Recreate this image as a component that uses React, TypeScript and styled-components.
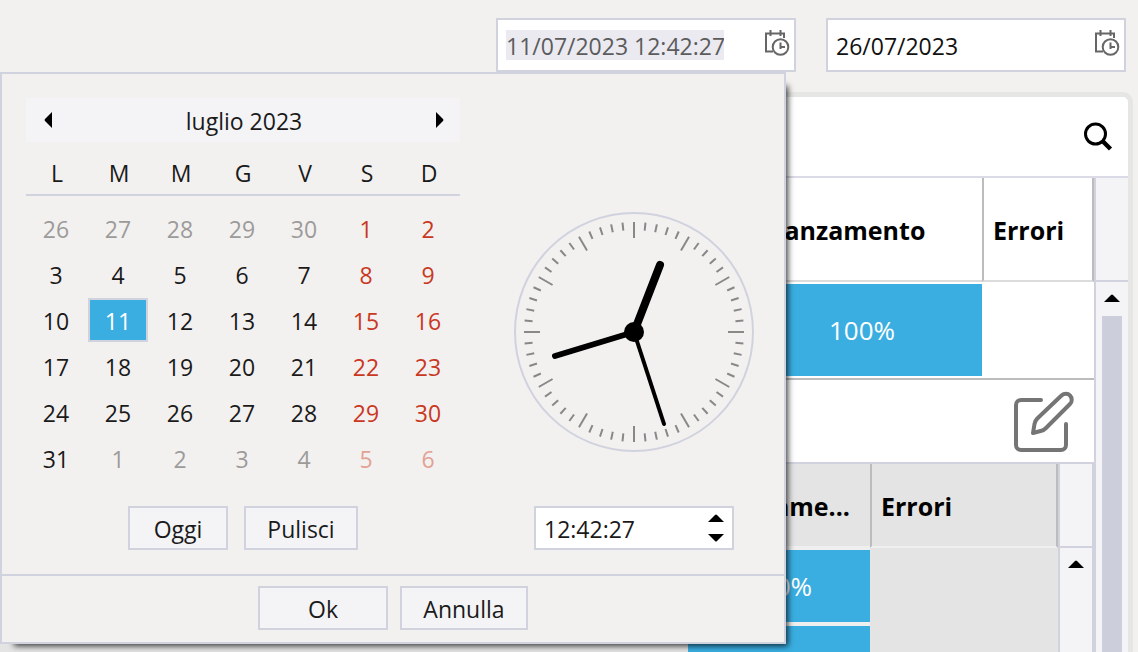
import React from "react";
import styled, { createGlobalStyle } from "styled-components";

const colors = {
  page: "#f3f1f0",
  line: "#d0d2de",
  control: "#f4f4f7",
  accent: "#3aaee1",
  thumb: "#cccedb",
  grid: "#bcbcbc",
  nested: "#e4e4e4",
  weekend: "#c9381f",
};

const GlobalStyle = createGlobalStyle`
  * { box-sizing: border-box; }
  body {
    margin: 0;
    background: ${colors.page};
    color: #1a1a1a;
    font-family: "Open Sans", "Noto Sans", sans-serif;
    font-size: 23px;
    line-height: 30px;
  }
  button, input { font: inherit; color: inherit; }
  button { padding: 0; border: 0; background: none; }
  svg { display: block; }
`;

const Page = styled.div`
  display: flex;
  flex-direction: column;
  height: 100vh;
  overflow: hidden;
`;

const FilterBar = styled.header`
  display: flex;
  justify-content: flex-end;
  gap: 30px;
  padding: 18px 12px 20px;
`;

const DateField = styled.div`
  position: relative;
  display: flex;
  align-items: flex-start;
  justify-content: space-between;
  width: 300px;
  height: 54px;
  padding: 10px 4px 0 8px;
  border: 2px solid ${colors.line};
  background: #fff;
`;

const DateInput = styled.input<{ $selected?: boolean }>`
  width: 218px;
  height: 30px;
  padding: 2px 0 0;
  border: 0;
  outline: 0;
  background: ${(p) => (p.$selected ? "#ebeaf1" : "transparent")};
  color: ${(p) => (p.$selected ? "#5c5c5c" : "#111")};
`;

const Popup = styled.div`
  position: absolute;
  z-index: 2;
  top: 52px;
  right: 8px;
  width: 786px;
  border: 2px solid ${colors.line};
  background: ${colors.page};
  box-shadow: 8px 8px 6px -6px rgba(0, 0, 0, 0.75);
`;

const PopupBody = styled.div`
  display: flex;
  padding: 24px 0;
  border-bottom: 2px solid ${colors.line};
`;

const CalendarColumn = styled.section`
  padding: 0 24px;
`;

const ClockColumn = styled.section`
  display: flex;
  flex: 1;
  flex-direction: column;
  align-items: center;
  justify-content: flex-end;
  gap: 54px;
`;

const MonthBar = styled.div`
  display: flex;
  align-items: center;
  justify-content: space-between;
  height: 44px;
  padding: 2px 12px 0 14px;
  background: ${colors.control};
`;

const ArrowButton = styled.button`
  display: flex;
  align-items: center;
  justify-content: center;
  width: 16px;
  height: 24px;
  padding-bottom: 2px;
`;

const MonthTable = styled.table`
  width: 434px;
  margin-top: 10px;
  border-spacing: 0;
  table-layout: fixed;

  tbody::before {
    content: "";
    display: block;
    height: 10px;
  }
`;

const Weekday = styled.th`
  height: 44px;
  padding: 0;
  border-bottom: 2px solid ${colors.line};
  font-weight: 400;
`;

const DayCell = styled.td`
  height: 46px;
  padding: 0 2px 2px 0;
`;

const Day = styled.button<{ $weekend: boolean; $outside: boolean; $selected: boolean }>`
  display: block;
  width: 100%;
  height: 44px;
  padding-top: 2px;
  border: 2px solid ${(p) => (p.$selected ? colors.line : "transparent")};
  background: ${(p) => (p.$selected ? colors.accent : "transparent")};
  color: ${(p) =>
    p.$selected
      ? "#fff"
      : p.$weekend
        ? p.$outside
          ? "#e2a195"
          : colors.weekend
        : p.$outside
          ? "#9c9b9a"
          : "#1a1a1a"};
`;

const ButtonRow = styled.div<{ $gap: number }>`
  display: flex;
  justify-content: center;
  gap: ${(p) => p.$gap}px;
`;

const QuickActions = styled(ButtonRow)`
  margin-top: 24px;
`;

const PopupFooter = styled(ButtonRow)`
  padding: 10px 0 12px;
`;

const PushButton = styled.button<{ $width: number }>`
  width: ${(p) => p.$width}px;
  height: 44px;
  padding-top: 2px;
  border: 2px solid ${colors.line};
  background: ${colors.control};
`;

const TimeField = styled.div`
  display: flex;
  align-items: center;
  justify-content: space-between;
  width: 200px;
  height: 44px;
  padding: 0 8px;
  border: 2px solid ${colors.line};
  background: #fff;
`;

const TimeInput = styled.input`
  width: 120px;
  height: 32px;
  padding: 2px 0 0;
  border: 0;
  outline: 0;
  background: transparent;
`;

const Spinner = styled.div`
  display: flex;
  flex-direction: column;
  gap: 12px;
`;

const Card = styled.main`
  display: flex;
  flex: 1;
  flex-direction: column;
  min-height: 0;
  margin-right: 5px;
  border: 5px solid #e6e6e5;
  border-width: 5px 5px 0 0;
  border-radius: 0 10px 0 0;
  background: #fff;
  overflow: hidden;
`;

const CardToolbar = styled.div`
  display: flex;
  flex: none;
  align-items: center;
  justify-content: flex-end;
  height: 81px;
  padding-right: 15px;
  border-bottom: 2px solid #dadbe6;
`;

const GridArea = styled.div`
  display: flex;
  flex: 1;
  min-height: 0;
  overflow: hidden;
`;

const GridPane = styled.div`
  flex: 1;
  min-width: 0;
`;

const DataTable = styled.table`
  width: 100%;
  border-spacing: 0;
  table-layout: fixed;
`;

const HeadCell = styled.th<{ $height: number; $nested?: boolean; $last?: boolean }>`
  height: ${(p) => p.$height}px;
  padding: 2px 9px 0;
  border-bottom: 2px solid ${(p) => (p.$nested ? "#efefef" : "#dcdcdc")};
  border-left: 2px solid ${colors.grid};
  border-right: ${(p) => (p.$last ? `2px solid ${colors.grid}` : "0")};
  background: ${(p) => (p.$nested ? colors.nested : "#fff")};
  color: #000;
  font-size: 25px;
  font-weight: 700;
  text-align: left;
  white-space: nowrap;
`;

const Cell = styled.td<{ $line?: string }>`
  padding: 2px 0;
  border-bottom: ${(p) => (p.$line ? `2px solid ${p.$line}` : "0")};
`;

const NestedBarCell = styled.td`
  padding: 2px 0;
  background: #efefef;
`;

const Bar = styled.div<{ $height: number }>`
  display: flex;
  align-items: center;
  justify-content: center;
  height: ${(p) => p.$height}px;
  background: ${colors.accent};
  color: #fff;
  font-size: 26px;
`;

const EditCell = styled.td`
  height: 84px;
  padding: 0 18px;
  border-bottom: 2px solid ${colors.line};
`;

const EditButton = styled.button`
  display: block;
  margin-left: auto;
`;

const DetailCell = styled.td`
  padding: 0;
`;

const NestedGrid = styled.div`
  display: flex;
  background: ${colors.nested};
`;

const ScrollColumn = styled.div<{ $closed?: boolean }>`
  display: flex;
  flex: none;
  flex-direction: column;
  width: ${(p) => (p.$closed ? 36 : 34)}px;
  border-left: 2px solid ${colors.line};
  border-right: ${(p) => (p.$closed ? `2px solid ${colors.line}` : "0")};
  background: ${colors.control};
`;

const ScrollHead = styled.div<{ $height: number }>`
  flex: none;
  height: ${(p) => p.$height}px;
  border-bottom: 2px solid ${colors.line};
`;

const ScrollUp = styled.button`
  display: flex;
  flex: none;
  align-items: center;
  justify-content: center;
  height: 34px;
  padding-bottom: 2px;
`;

const ScrollThumb = styled.div`
  flex: 1;
  margin: 0 6px;
  background: ${colors.thumb};
`;

const CalendarClockIcon = () => (
  <svg width="26" height="27" viewBox="0 0 26 27" fill="none" stroke="#666" strokeWidth="2">
    <path d="M9 21.500H2V3.500H20V8" />
    <path d="M6.500 0V6M16.500 0V6" />
    <circle cx="16.500" cy="17" r="7.800" />
    <path d="M16.500 12.500V19M16.500 17H21" />
  </svg>
);

const SearchIcon = () => (
  <svg width="30" height="30" viewBox="0 0 30 30" fill="none" stroke="#000">
    <circle cx="12.500" cy="12" r="10" strokeWidth="3" />
    <path d="M19.500 19L27.500 27" strokeWidth="4.500" />
  </svg>
);

const EditIcon = () => (
  <svg
    width="64"
    height="64"
    viewBox="0 0 64 64"
    fill="none"
    stroke="#757575"
    strokeWidth="4"
    strokeLinecap="round"
    strokeLinejoin="round"
  >
    <path d="M29 11H9a5 5 0 0 0-5 5V56a5 5 0 0 0 5 5H49a5 5 0 0 0 5-5V35" />
    <path d="M21 44L22.500 35C23 32.500 23.800 31 25.300 29.500L49.500 6.500C52 4.200 56 4.200 58 6.500C60.400 9 60.200 13 58 15L34 39C32.500 40.500 31.500 41.200 29.500 41.700Z" />
  </svg>
);

const trianglePaths = {
  up: "M0 8L7 1Q8 0 9 1L16 8Z",
  down: "M0 0L7 7Q8 8 9 7L16 0Z",
  left: "M8 0L1 7Q0 8 1 9L8 16Z",
  right: "M0 0L7 7Q8 8 7 9L0 16Z",
};

const Triangle = ({ direction }: { direction: keyof typeof trianglePaths }) => {
  const vertical = direction === "up" || direction === "down";
  const width = vertical ? 16 : 8;
  const height = vertical ? 8 : 16;
  return (
    <svg width={width} height={height} viewBox={`0 0 ${width} ${height}`}>
      <path d={trianglePaths[direction]} fill="#000" />
    </svg>
  );
};

const minutes = Array.from({ length: 60 }, (_, i) => i);

const Clock = () => (
  <svg width="240" height="240" viewBox="0 0 240 240" role="img" aria-label="12:42:27">
    <circle cx="120" cy="120" r="119" fill="none" stroke={colors.line} strokeWidth="2" />
    {minutes.map((m) => (
      <line
        key={m}
        x1="120"
        x2="120"
        y1="10"
        y2={m % 5 === 0 ? 26 : 18}
        stroke="#888"
        strokeWidth="2"
        transform={`rotate(${m * 6} 120 120)`}
      />
    ))}
    <g stroke="#000" strokeLinecap="round">
      <line x1="120" y1="120" x2="146" y2="53" strokeWidth="8" />
      <line x1="120" y1="120" x2="41" y2="144" strokeWidth="6" />
      <line x1="120" y1="120" x2="150" y2="212" strokeWidth="4" />
    </g>
    <circle cx="120" cy="120" r="10" />
  </svg>
);

const weekdays = ["L", "M", "M", "G", "V", "S", "D"];

// Six weeks, starting on Monday 26 June 2023.
const weeks = Array.from({ length: 6 }, (_, w) =>
  Array.from({ length: 7 }, (_, d) => {
    const offset = w * 7 + d - 4;
    const outside = offset < 1 || offset > 31;
    const label = offset < 1 ? offset + 30 : offset > 31 ? offset - 31 : offset;
    return { label, outside, weekend: d > 4, selected: !outside && label === 11 };
  }),
);

const DatePopup = () => (
  <Popup role="dialog" aria-label="Data e ora">
    <PopupBody>
      <CalendarColumn>
        <MonthBar>
          <ArrowButton aria-label="Mese precedente">
            <Triangle direction="left" />
          </ArrowButton>
          <span>luglio 2023</span>
          <ArrowButton aria-label="Mese successivo">
            <Triangle direction="right" />
          </ArrowButton>
        </MonthBar>
        <MonthTable>
          <thead>
            <tr>
              {weekdays.map((name, i) => (
                <Weekday key={i}>{name}</Weekday>
              ))}
            </tr>
          </thead>
          <tbody>
            {weeks.map((week, i) => (
              <tr key={i}>
                {week.map((day) => (
                  <DayCell key={day.label}>
                    <Day $weekend={day.weekend} $outside={day.outside} $selected={day.selected}>
                      {day.label}
                    </Day>
                  </DayCell>
                ))}
              </tr>
            ))}
          </tbody>
        </MonthTable>
        <QuickActions $gap={16}>
          <PushButton $width={100}>Oggi</PushButton>
          <PushButton $width={114}>Pulisci</PushButton>
        </QuickActions>
      </CalendarColumn>
      <ClockColumn>
        <Clock />
        <TimeField>
          <TimeInput aria-label="Ora" defaultValue="12:42:27" />
          <Spinner>
            <button aria-label="Aumenta">
              <Triangle direction="up" />
            </button>
            <button aria-label="Diminuisci">
              <Triangle direction="down" />
            </button>
          </Spinner>
        </TimeField>
      </ClockColumn>
    </PopupBody>
    <PopupFooter $gap={12}>
      <PushButton $width={130}>Ok</PushButton>
      <PushButton $width={128}>Annulla</PushButton>
    </PopupFooter>
  </Popup>
);

const NestedTable = () => (
  <NestedGrid>
    <GridPane>
      <DataTable>
        <colgroup>
          <col />
          <col width="182" />
          <col width="188" />
        </colgroup>
        <thead>
          <tr>
            <HeadCell $height={84} $nested />
            <HeadCell $height={84} $nested>
              Avanzame...
            </HeadCell>
            <HeadCell $height={84} $nested $last>
              Errori
            </HeadCell>
          </tr>
        </thead>
        <tbody>
          {[0, 1].map((row) => (
            <tr key={row}>
              <Cell />
              <NestedBarCell>
                <Bar $height={72}>100%</Bar>
              </NestedBarCell>
              <Cell />
            </tr>
          ))}
        </tbody>
      </DataTable>
    </GridPane>
    <ScrollColumn $closed>
      <ScrollHead $height={84} />
      <ScrollUp aria-label="Scorri su">
        <Triangle direction="up" />
      </ScrollUp>
    </ScrollColumn>
  </NestedGrid>
);

export default function App() {
  return (
    <Page>
      <GlobalStyle />
      <FilterBar>
        <DateField>
          <DateInput $selected aria-label="Data iniziale" defaultValue="11/07/2023 12:42:27" />
          <button aria-label="Apri calendario iniziale">
            <CalendarClockIcon />
          </button>
          <DatePopup />
        </DateField>
        <DateField>
          <DateInput aria-label="Data finale" defaultValue="26/07/2023" />
          <button aria-label="Apri calendario finale">
            <CalendarClockIcon />
          </button>
        </DateField>
      </FilterBar>
      <Card>
        <CardToolbar>
          <button aria-label="Cerca">
            <SearchIcon />
          </button>
        </CardToolbar>
        <GridArea>
          <GridPane>
            <DataTable>
              <colgroup>
                <col />
                <col width="240" />
                <col width="112" />
              </colgroup>
              <thead>
                <tr>
                  <HeadCell $height={104} />
                  <HeadCell $height={104}>Avanzamento</HeadCell>
                  <HeadCell $height={104} $last>
                    Errori
                  </HeadCell>
                </tr>
              </thead>
              <tbody>
                <tr>
                  <Cell $line={colors.grid} />
                  <Cell $line={colors.grid}>
                    <Bar $height={92}>100%</Bar>
                  </Cell>
                  <Cell $line={colors.grid} />
                </tr>
                <tr>
                  <EditCell colSpan={3}>
                    <EditButton aria-label="Modifica">
                      <EditIcon />
                    </EditButton>
                  </EditCell>
                </tr>
                <tr>
                  <DetailCell colSpan={3}>
                    <NestedTable />
                  </DetailCell>
                </tr>
              </tbody>
            </DataTable>
          </GridPane>
          <ScrollColumn>
            <ScrollHead $height={104} />
            <ScrollUp aria-label="Scorri su">
              <Triangle direction="up" />
            </ScrollUp>
            <ScrollThumb />
          </ScrollColumn>
        </GridArea>
      </Card>
    </Page>
  );
}
